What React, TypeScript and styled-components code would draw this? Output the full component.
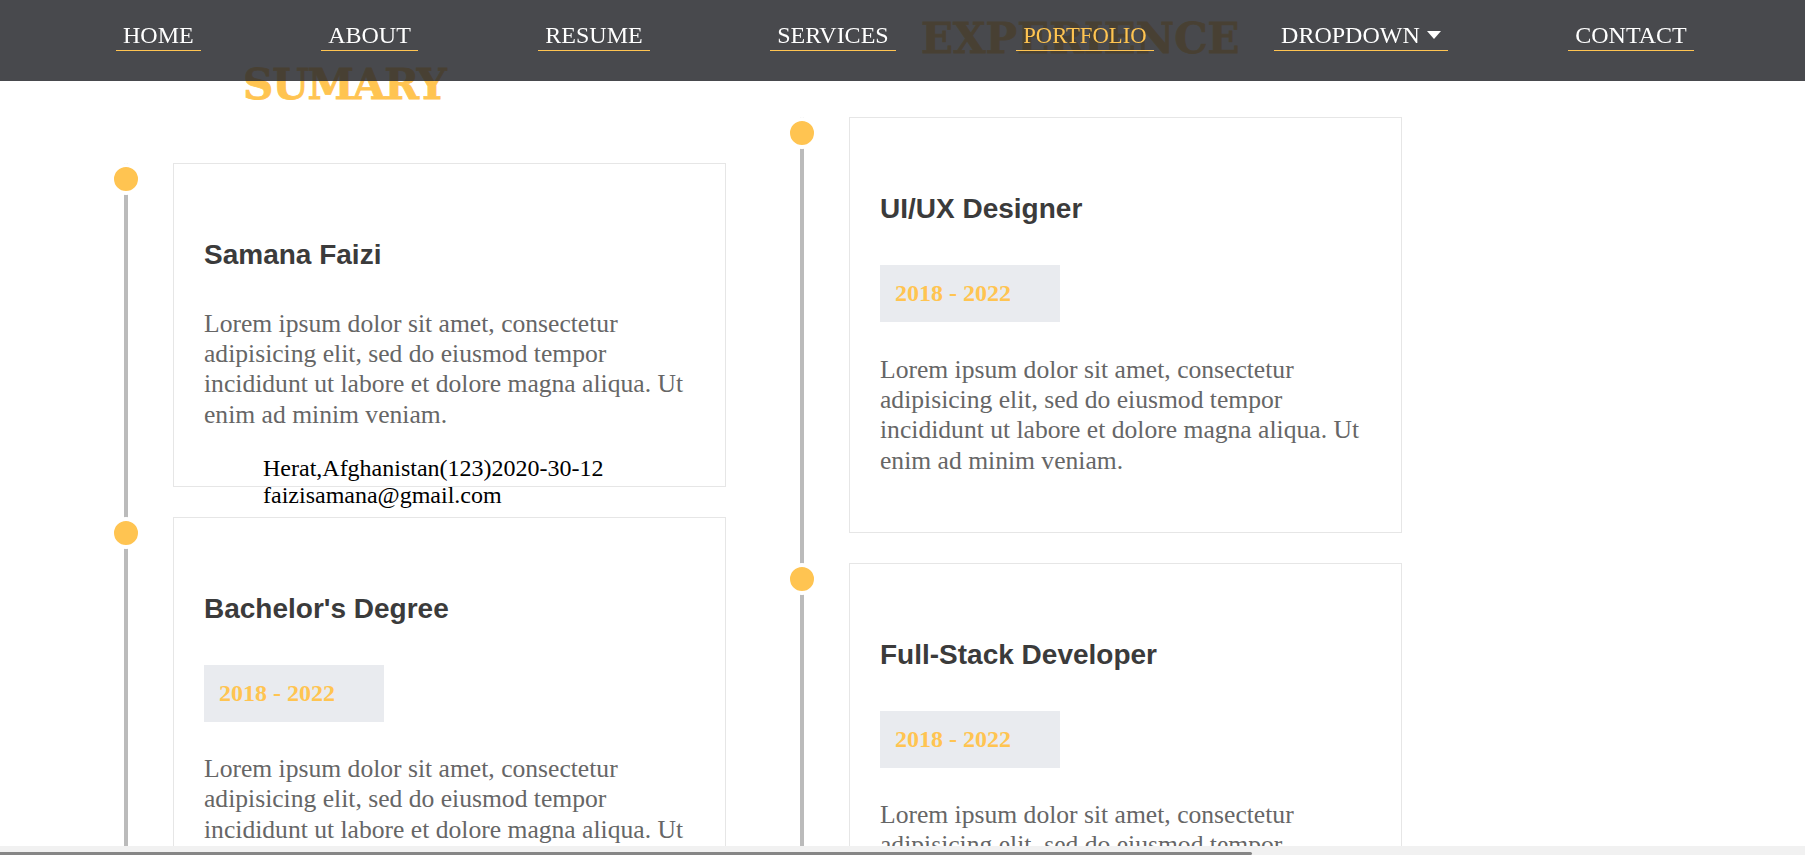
import React from "react";
import styled, { createGlobalStyle } from "styled-components";

const GlobalStyle = createGlobalStyle`
  html, body {
    margin: 0;
    padding: 0;
    background: #ffffff;
  }
  body {
    font-family: "Liberation Serif", "Times New Roman", serif;
    overflow: hidden;
  }
`;

const NavBar = styled.nav`
  position: fixed;
  top: 0;
  left: 0;
  right: 0;
  height: 81px;
  background: rgba(40, 41, 46, 0.85);
  z-index: 10;
`;

const NavList = styled.ul`
  list-style: none;
  margin: 0;
  padding: 22px 0 0 116px;
  display: flex;
  align-items: flex-start;
  gap: 120.5px;
`;

const NavLink = styled.a<{ $active?: boolean }>`
  display: block;
  padding: 0 7px;
  font-family: "Liberation Serif", "Times New Roman", serif;
  font-size: ${(p) => (p.$active ? "22.7px" : "24px")};
  line-height: 27.6px;
  color: ${(p) => (p.$active ? "#ffc451" : "#ffffff")};
  text-decoration: none;
  white-space: nowrap;
  border-bottom: 1px solid #ffc451;
`;

const Caret = styled.svg`
  width: 14px;
  height: 8px;
  margin-left: 7px;
  vertical-align: 4px;
`;

const Main = styled.main`
  display: flex;
  align-items: flex-start;
  gap: 74px;
  padding-left: 124px;
`;

const Column = styled.section<{ $offset: number }>`
  width: 602px;
  margin-top: ${(p) => p.$offset}px;
  display: flex;
  flex-direction: column;
`;

const SectionTitle = styled.h2<{ $indent: number; $tracking?: number }>`
  margin: 0 0 54.4px ${(p) => p.$indent}px;
  font-family: "DejaVu Serif", "Liberation Serif", serif;
  font-weight: 700;
  font-size: 42px;
  line-height: normal;
  letter-spacing: ${(p) => p.$tracking ?? 0}px;
  color: #ffc451;
  -webkit-text-stroke: 0.8px #ffc451;
`;

const Item = styled.div`
  position: relative;
  border-left: 4px solid #bbbbbb;
  padding: 0 0 30px 45px;

  &::before {
    content: "";
    position: absolute;
    left: -18px;
    top: 0;
    width: 24px;
    height: 24px;
    border-radius: 50%;
    background: #ffc451;
    border: 4px solid #ffffff;
  }
`;

const Card = styled.div`
  border: 1px solid #e6e6e6;
  padding: 0 30px 55.5px;
  background: #ffffff;
`;

const CardTitle = styled.h3`
  margin: 75px 0 0;
  font-family: "Liberation Sans", Arial, sans-serif;
  font-weight: 700;
  font-size: 28px;
  line-height: normal;
  color: #3b3b3b;
`;

const DateBadge = styled.div`
  margin-top: 40px;
  width: 180px;
  box-sizing: border-box;
  padding: 15px;
  background: #e9ebef;
  font-family: "Liberation Serif", "Times New Roman", serif;
  font-weight: 700;
  font-size: 24px;
  line-height: normal;
  color: #ffc451;
`;

const Text = styled.p<{ $afterTitle?: boolean }>`
  margin: ${(p) => (p.$afterTitle ? 37.5 : 32.5)}px 0 0;
  font-family: "Liberation Serif", "Times New Roman", serif;
  font-size: 25.6px;
  line-height: 30.3px;
  color: #666666;
`;

const Address = styled.address`
  position: absolute;
  left: 135px;
  top: 292px;
  font-style: normal;
  font-family: "Liberation Serif", "Times New Roman", serif;
  font-size: 24px;
  line-height: 26.6px;
  color: #000000;
  white-space: nowrap;
`;

const ScrollTrack = styled.div`
  position: fixed;
  left: 0;
  right: 0;
  bottom: 0;
  height: 9px;
  background: #f1f1f1;
  z-index: 20;
  display: flex;
  align-items: flex-end;
`;

const ScrollThumb = styled.div`
  width: 1252px;
  height: 3px;
  background: #868686;
  border-radius: 0 3px 3px 0;
`;

const LOREM =
  "Lorem ipsum dolor sit amet, consectetur adipisicing elit, sed do eiusmod tempor incididunt ut labore et dolore magna aliqua. Ut enim ad minim veniam.";

const navItems = [
  { label: "HOME" },
  { label: "ABOUT" },
  { label: "RESUME" },
  { label: "SERVICES" },
  { label: "PORTFOLIO", active: true },
  { label: "DROPDOWN", caret: true },
  { label: "CONTACT" },
];

type Entry = { title: string; date?: string };

const TimelineEntry: React.FC<{ entry: Entry; children?: React.ReactNode }> = ({
  entry,
  children,
}) => (
  <Item>
    <Card>
      <CardTitle>{entry.title}</CardTitle>
      {entry.date && <DateBadge>{entry.date}</DateBadge>}
      <Text $afterTitle={!entry.date}>{LOREM}</Text>
    </Card>
    {children}
  </Item>
);

export default function App() {
  return (
    <>
      <GlobalStyle />
      <NavBar>
        <NavList>
          {navItems.map((n) => (
            <li key={n.label}>
              <NavLink href="#" $active={n.active}>
                {n.label}
                {n.caret && (
                  <Caret viewBox="0 0 14 8" aria-hidden="true">
                    <path d="M0 0 H14 L7 8 Z" fill="#ffffff" />
                  </Caret>
                )}
              </NavLink>
            </li>
          ))}
        </NavList>
      </NavBar>

      <Main>
        <Column $offset={60}>
          <SectionTitle $indent={119} $tracking={-1.2}>
            SUMARY
          </SectionTitle>
          <TimelineEntry entry={{ title: "Samana Faizi" }}>
            <Address>
              Herat,Afghanistan(123)2020-30-12
              <br />
              faizisamana@gmail.com
            </Address>
          </TimelineEntry>
          <TimelineEntry entry={{ title: "Bachelor's Degree", date: "2018 - 2022" }} />
        </Column>

        <Column $offset={14}>
          <SectionTitle $indent={121}>EXPERIENCE</SectionTitle>
          <TimelineEntry entry={{ title: "UI/UX Designer", date: "2018 - 2022" }} />
          <TimelineEntry entry={{ title: "Full-Stack Developer", date: "2018 - 2022" }} />
        </Column>
      </Main>

      <ScrollTrack>
        <ScrollThumb />
      </ScrollTrack>
    </>
  );
}
